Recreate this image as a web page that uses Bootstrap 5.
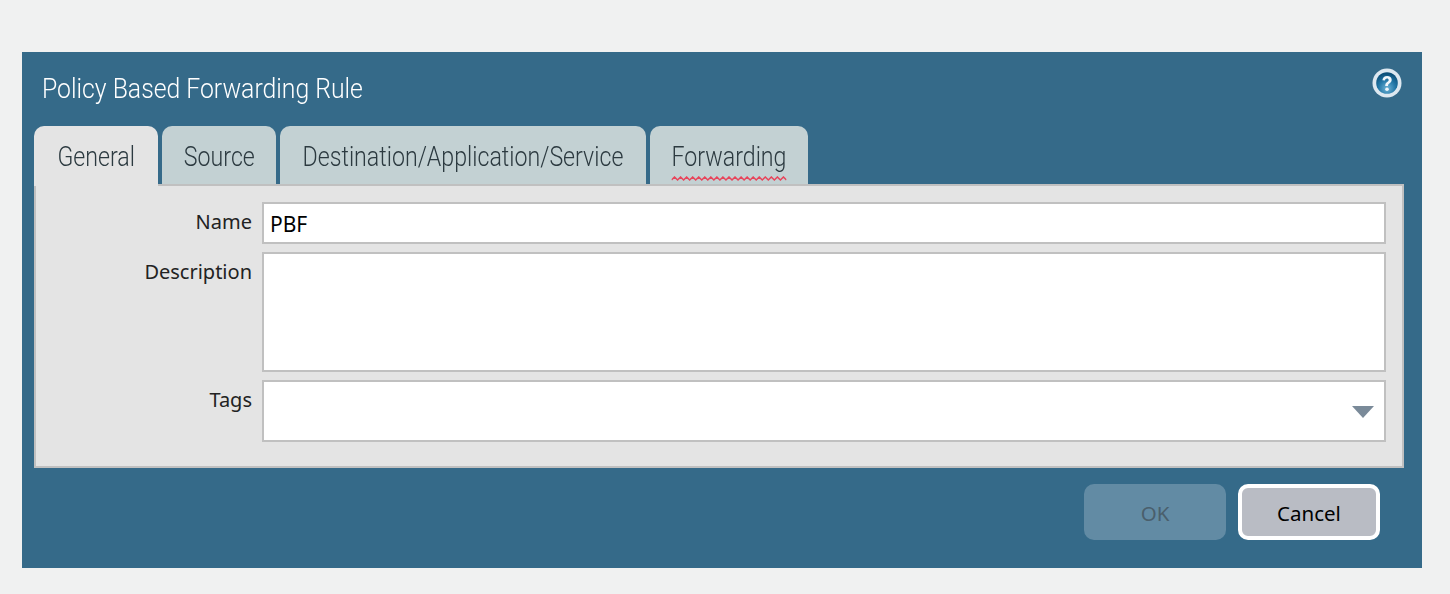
<!DOCTYPE html>
<html lang="en">
<head>
<meta charset="utf-8">
<title>Policy Based Forwarding Rule</title>
<link rel="stylesheet" href="https://cdn.jsdelivr.net/npm/bootstrap@5.3.0/dist/css/bootstrap.min.css">
<style>
html, body { height: 100%; }
body { background: #f0f1f1; padding: 52px 28px 26px 22px; overflow: hidden; }
.pbf-dialog { background: #356a89; height: 516px; padding: 0 18px 0 12px; }
.pbf-head { height: 74px; padding-left: 8px; padding-right: 2px; padding-top: 17px; }
.pbf-title { font-family: Roboto, sans-serif; font-weight: 300; font-size: 28.500px; line-height: 40px; color: #fff; margin: 0; white-space: nowrap; transform: scaleX(.869); transform-origin: left center; }
.pbf-help { width: 30px; height: 30px; display: block; margin-top: -1px; }
.pbf-tabs { gap: 4px; height: 58px; }
.pbf-tab { font-family: Roboto, sans-serif; font-weight: 300; font-size: 27px; line-height: 63px; color: #2c3a40; background: #c3d1d3; border-radius: 10px 10px 0 0; height: 58px; white-space: nowrap; display: flex; justify-content: center; }
.pbf-tab-on { background: #e4e4e4; height: 60px; margin-bottom: -2px; position: relative; z-index: 1; }
.pbf-w1 { width: 124px; }
.pbf-w2 { width: 114px; }
.pbf-w3 { width: 366px; }
.pbf-w4 { width: 158px; }
.pbf-squeeze { display: block; flex: none; height: 58px; transform: scaleX(.858); position: relative; }
.pbf-squiggle { position: absolute; left: 0; bottom: 2px; height: 6px; width: 100%; display: block; }
.pbf-panel { background: #e4e4e4; border: 2px solid #c0c0c0; height: 284px; padding: 16px 16px 24px 0; gap: 8px; }
.pbf-row { gap: 10px; }
.pbf-label { width: 216px; flex: 0 0 216px; text-align: right; font-family: "Noto Sans", sans-serif; font-size: 20px; line-height: 28px; color: #222; padding-top: 6px; }
.pbf-grow { flex: 1 1 0; min-width: 0; }
.pbf-field { border: 2px solid #c0c0c0; background: #fff; border-radius: 0; padding: 2px 6px 0; font-family: "Noto Sans", sans-serif; font-size: 21px; color: #000; box-shadow: none; }
.pbf-h-name { height: 42px; }
.pbf-h-desc { height: 120px; resize: none; }
.pbf-h-tags { height: 62px; }
.pbf-caret { width: 22px; height: 13px; right: 12px; top: 25px; }
.pbf-foot { gap: 12px; padding: 16px 24px 0 0; }
.pbf-btn { width: 142px; height: 56px; border-radius: 10px; font-family: "Noto Sans", sans-serif; font-size: 20.500px; padding: 2px 0 0; }
.pbf-ok, .pbf-ok:disabled { background: #628ba4; color: #4a5f6c; border: 0; opacity: 1; }
.pbf-cancel, .pbf-cancel:hover { background: #b9bcc4; color: #000; border: 4px solid #fff; }
</style>
</head>
<body>
<div class="pbf-dialog d-flex flex-column">
  <div class="pbf-head d-flex justify-content-between align-items-start">
    <h1 class="pbf-title">Policy Based Forwarding Rule</h1>
    <svg class="pbf-help" viewBox="0 0 30 30" aria-label="Help">
      <defs>
        <radialGradient id="pbfGlobe" cx="50%" cy="75%" r="70%">
          <stop offset="0" stop-color="#6fb4d6"/>
          <stop offset=".55" stop-color="#2478a8"/>
          <stop offset="1" stop-color="#0c4f78"/>
        </radialGradient>
        <filter id="pbfSoft" x="-10%" y="-10%" width="120%" height="120%"><feGaussianBlur stdDeviation=".55"/></filter>
      </defs>
      <g filter="url(#pbfSoft)">
        <circle cx="15" cy="15" r="14.500" fill="#dde8f0"/>
        <circle cx="15" cy="15" r="10.800" fill="url(#pbfGlobe)"/>
        <path d="M10.400 12.200c.3-2.700 2.100-4.200 4.700-4.200 2.800 0 4.600 1.500 4.600 3.800 0 1.800-1 2.800-2.300 3.700-1.100.7-1.400 1.300-1.400 2.600h-2.800c0-2.200.6-3.200 2-4.100 1-.7 1.500-1.200 1.500-1.900 0-.9-.7-1.500-1.700-1.500-1.100 0-1.800.7-2 1.900z" fill="#f0f6fa"/>
        <circle cx="15" cy="21.200" r="1.800" fill="#f0f6fa"/>
      </g>
    </svg>
  </div>
  <div class="pbf-tabs d-flex align-items-start">
    <div class="pbf-tab pbf-tab-on pbf-w1"><span class="pbf-squeeze">General</span></div>
    <div class="pbf-tab pbf-w2"><span class="pbf-squeeze">Source</span></div>
    <div class="pbf-tab pbf-w3"><span class="pbf-squeeze">Destination/Application/Service</span></div>
    <div class="pbf-tab pbf-w4"><span class="pbf-squeeze">Forwarding<svg class="pbf-squiggle" viewBox="0 0 114 6" preserveAspectRatio="none"><polyline fill="none" stroke="#e8445a" stroke-width="1.500" points="0,4 3,1 6,4 9,1 12,4 15,1 18,4 21,1 24,4 27,1 30,4 33,1 36,4 39,1 42,4 45,1 48,4 51,1 54,4 57,1 60,4 63,1 66,4 69,1 72,4 75,1 78,4 81,1 84,4 87,1 90,4 93,1 96,4 99,1 102,4 105,1 108,4 111,1 114,4"/></svg></span></div>
  </div>
  <div class="pbf-panel d-flex flex-column">
    <div class="pbf-row d-flex">
      <label class="pbf-label" for="pbfName">Name</label>
      <input id="pbfName" class="form-control pbf-field pbf-h-name pbf-grow" value="PBF">
    </div>
    <div class="pbf-row d-flex">
      <label class="pbf-label" for="pbfDesc">Description</label>
      <textarea id="pbfDesc" class="form-control pbf-field pbf-h-desc pbf-grow"></textarea>
    </div>
    <div class="pbf-row d-flex">
      <label class="pbf-label" for="pbfTags">Tags</label>
      <div class="position-relative pbf-grow">
        <input id="pbfTags" class="form-control pbf-field pbf-h-tags">
        <svg class="pbf-caret position-absolute" viewBox="0 0 22 13"><path d="M0 1h22L11 13z" fill="#7a8a99"/></svg>
      </div>
    </div>
  </div>
  <div class="pbf-foot d-flex justify-content-end">
    <button type="button" class="btn pbf-btn pbf-ok" disabled>OK</button>
    <button type="button" class="btn pbf-btn pbf-cancel">Cancel</button>
  </div>
</div>
<script src="https://cdn.jsdelivr.net/npm/bootstrap@5.3.0/dist/js/bootstrap.bundle.min.js"></script>
</body>
</html>
